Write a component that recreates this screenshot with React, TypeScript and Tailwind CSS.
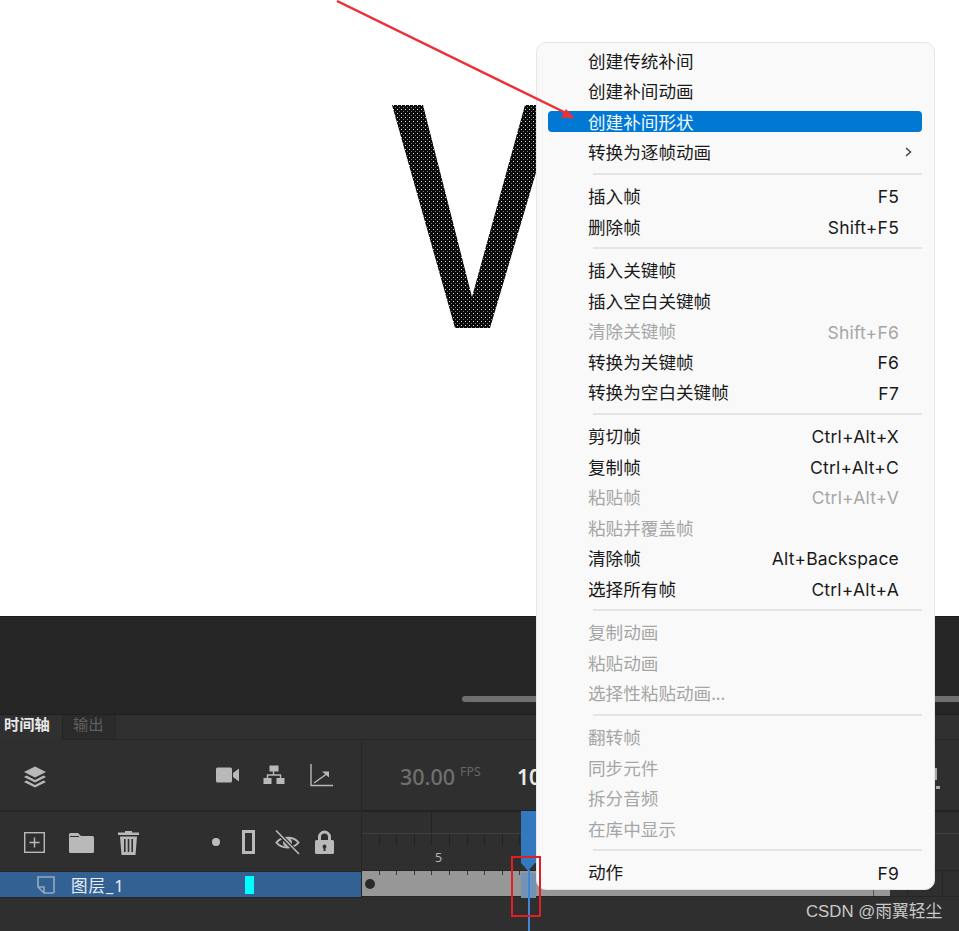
const F = '"Noto Sans","Noto Sans CJK SC",sans-serif';
const K = 'Inter,"Noto Sans",sans-serif';

type Row = { t: string; k?: string; d?: boolean; a?: boolean; h?: boolean } | 'sep';
const rows: Row[] = [
  { t: '创建传统补间' }, { t: '创建补间动画' }, { t: '创建补间形状', h: true }, { t: '转换为逐帧动画', a: true }, 'sep',
  { t: '插入帧', k: 'F5' }, { t: '删除帧', k: 'Shift+F5' }, 'sep',
  { t: '插入关键帧' }, { t: '插入空白关键帧' }, { t: '清除关键帧', k: 'Shift+F6', d: true }, { t: '转换为关键帧', k: 'F6' }, { t: '转换为空白关键帧', k: 'F7' }, 'sep',
  { t: '剪切帧', k: 'Ctrl+Alt+X' }, { t: '复制帧', k: 'Ctrl+Alt+C' }, { t: '粘贴帧', k: 'Ctrl+Alt+V', d: true }, { t: '粘贴并覆盖帧', d: true }, { t: '清除帧', k: 'Alt+Backspace' }, { t: '选择所有帧', k: 'Ctrl+Alt+A' }, 'sep',
  { t: '复制动画', d: true }, { t: '粘贴动画', d: true }, { t: '选择性粘贴动画...', d: true }, 'sep',
  { t: '翻转帧', d: true }, { t: '同步元件', d: true }, { t: '拆分音频', d: true }, { t: '在库中显示', d: true }, 'sep',
  { t: '动作', k: 'F9' },
];

function Menu() {
  return (
    <div className="absolute left-[536px] top-[42px] w-[399px] h-[848px] rounded-[10px] bg-[#f9f9f9] border border-[#e6e6e6] pt-[2.500px] px-[11px] text-[17.600px] text-[#1a1a1a]" style={{ fontFamily: F }}>
      {rows.map((r, i) =>
        r === 'sep' ? (
          <div key={i} className="h-[13.250px] flex items-center pl-[45px] pr-[1px]"><div className="h-[2px] w-full bg-[#e4e4e4]" /></div>
        ) : (
          <div key={i} className="h-[30.500px] flex items-center">
            <div className={`w-full h-[21px] rounded-[4px] flex items-center justify-between pl-[40px] pr-[23px] mr-[1px] leading-none ${r.h ? 'bg-[#0078d4] text-[#f2f8fd]' : ''} ${r.d ? 'text-[#a6a6a6]' : ''}`}>
              <span className="pt-[2px]">{r.t}</span>
              {r.k && <span className="pt-[2px] text-[17.500px] tracking-[0.2px]" style={{ fontFamily: K }}>{r.k}</span>}
              {r.a && (
                <svg width="9" height="12" viewBox="0 0 9 12" className="-mr-[14px]"><path d="M2 2l4.500 4-4.500 4" fill="none" stroke="#444" strokeWidth="1.500" /></svg>
              )}
            </div>
          </div>
        ),
      )}
    </div>
  );
}

const ic = '#b9b9b9';
const ticks = Array.from({ length: 28 }, (_, i) => i);

function LayerIcons() {
  return (
    <svg viewBox="0 0 24 24" fill={ic} className="w-[24px] h-[24px] mt-[4px]">
      <path d="M12 1.500 L23 7 12 12.500 1 7Z" />
      <path d="M3.500 10.500 L12 15 20.500 10.500 23 12 12 17.500 1 12Z" />
      <path d="M3.500 15.500 L12 20 20.500 15.500 23 17 12 22.500 1 17Z" />
    </svg>
  );
}

function Ruler() {
  return (
    <div className="flex flex-col h-[61px] border-t-2 border-[#232323]">
      <div className="h-[22px] border-b border-[#3f3f3f] flex">
        <div className="w-[70px] border-r border-[#232323]" />
      </div>
      <div className="h-[12px] flex">
        {ticks.map((i) => <div key={i} className="w-[17.600px] shrink-0 border-r border-[#232323]" />)}
      </div>
      <div className="flex-1 relative">
        <span className="absolute left-[73px] top-[3px] text-[12.500px] text-[#b3b3b3]" style={{ fontFamily: F }}>5</span>
      </div>
    </div>
  );
}

export default function App() {
  return (
    <div className="relative w-[959px] h-[931px] overflow-hidden bg-[#2f2f2f]" style={{ fontFamily: F }}>
      <div className="h-[616px] bg-white" />
      <div className="h-[98px] bg-[#262626] border-t border-[#1c1c1c] flex flex-col items-end pt-[79px]">
        <div className="w-[497px] h-[6px] rounded-l-full bg-[#6f6f6f]" />
      </div>

      <div className="h-[26px] flex items-stretch bg-[#303030] border-t border-[#1f1f1f]">
        <div className="w-[63px] pl-[4px] pb-[5px] text-[15.300px] font-semibold text-[#e8e8e8] flex items-center leading-none border-r border-[#242424]">时间轴</div>
        <div className="w-[53px] pl-[10px] pb-[5px] text-[15.300px] text-[#5f5f5f] bg-[#2b2b2b] flex items-center leading-none border-r border-[#272727] border-b border-b-[#272727]">输出</div>
        <div className="flex-1 border-b border-[#272727]" />
      </div>

      <div className="flex">
        <div className="w-[361px] shrink-0">
          <div className="h-[70px] flex items-center pl-[23px] pr-[28px] justify-between">
            <LayerIcons />
            <div className="flex items-center gap-[24px]">
              <svg width="24" height="16" viewBox="0 0 24 16" fill={ic}><rect x="0" y="0.500" width="16" height="15" rx="1.500" /><path d="M17 6 L23 1.500V14.500L17 10Z" /></svg>
              <svg width="22" height="20" viewBox="0 0 22 20" fill={ic} className="-ml-[1px] mr-[1px]"><rect x="6.500" y="0.500" width="9" height="6" /><rect x="0.500" y="13" width="8" height="6" /><rect x="13.500" y="13" width="8" height="6" /><path d="M10.500 6v4M4.500 13v-3h13v3" fill="none" stroke={ic} strokeWidth="1.400" /></svg>
              <svg width="23" height="23" viewBox="0 0 23 23" fill="none" stroke={ic} strokeWidth="1.400"><path d="M1 0v21.500h22" /><path d="M4 19 L18 9" /><path d="M12 7.500h7v6" fill={ic} stroke="none" /></svg>
            </div>
          </div>
          <div className="h-[62px] border-t-2 border-[#262626] flex items-center pl-[24px] pr-[27px] justify-between">
            <div className="flex items-center gap-[24px]">
              <svg width="21" height="21" viewBox="0 0 21 21" fill="none" stroke={ic} strokeWidth="1.400"><rect x="0.700" y="0.700" width="19.600" height="19.600" /><path d="M10.500 5.500v10M5.500 10.500h10" /></svg>
              <svg width="25" height="21" viewBox="0 0 25 21" fill={ic}><path d="M0 2.500a1.500 1.500 0 0 1 1.500-1.500H9l3 3h11.500A1.500 1.500 0 0 1 25 5.500v14a1.500 1.500 0 0 1-1.500 1.500h-22A1.500 1.500 0 0 1 0 19.500z" /><path d="M1 4.500H10" stroke="#2f2f2f" strokeWidth="1" fill="none" /></svg>
              <svg width="23" height="25" viewBox="0 0 23 25" fill={ic} className="-ml-[1px]"><path d="M8 2.500V1h7v1.500h7V5H1V2.500z" /><path fillRule="evenodd" d="M3 6.500h17l-1.500 18.500h-14zM7 9v13h1.600V9zM10.700 9v13h1.600V9zM14.400 9v13h1.600V9z" /></svg>
            </div>
            <div className="flex items-center gap-[18px]">
              <div className="w-[8px] h-[8px] rounded-full bg-[#bdbdbd] mr-[4px]" />
              <div className="w-[13px] h-[24px] border-[3px] border-[#b9b9b9]" />
              <svg width="25" height="25" viewBox="0 0 25 25" fill="none" stroke={ic} strokeWidth="2" className="ml-[2px]"><path d="M1.500 12.500C6 6 19 6 23.500 12.500 19 19 6 19 1.500 12.500Z" /><circle cx="12.500" cy="12.500" r="3.500" fill={ic} /><path d="M1.500 1l22 23" stroke="#2f2f2f" strokeWidth="4" /><path d="M1 .5l23 23.500" strokeWidth="1.600" /></svg>
              <svg width="19" height="24" viewBox="0 0 19 24" fill={ic} className="-ml-[3px]"><path fillRule="evenodd" d="M1.500 10h1.500V7a6.500 6.500 0 0 1 13 0v3h1.500A1.500 1.500 0 0 1 19 11.500v11a1.500 1.500 0 0 1-1.500 1.500h-16A1.500 1.500 0 0 1 0 22.500v-11A1.500 1.500 0 0 1 1.500 10zM6 10h7V7a3.500 3.500 0 0 0-7 0zM9.500 14.500a2 2 0 0 0-1 3.700V21h2v-2.800a2 2 0 0 0-1-3.700z" /></svg>
            </div>
          </div>
          <div className="h-[27px] -mt-[1px] bg-[#336193] border-y border-[#262626] flex items-center pl-[37px] text-white">
            <svg width="18" height="18" viewBox="0 0 18 18" fill="none" stroke="#95a9c0" strokeWidth="1.600"><path d="M1 1h16v15a1 1 0 0 1-1 1H7L1 11zM1 11h6v6" /></svg>
            <span className="ml-[16px] pt-[3px] text-[16.500px] tracking-[1px] leading-none text-[#e8eef5] whitespace-nowrap">图层_1</span>
            <div className="ml-[120px] w-[9px] h-[18px] bg-[#00ffff]" />
          </div>
        </div>

        <div className="flex-1 border-l border-[#262626] min-w-0">
          <div className="h-[70px] flex items-center pl-[38px] pt-[4px]">
            <span className="text-[21.500px] font-medium text-[#6f6f6f] leading-none">30.00</span>
            <span className="ml-[5px] mb-[10px] text-[12.500px] text-[#666666] leading-none">FPS</span>
            <span className="ml-[36px] text-[21px] font-semibold text-[#eaeaea] leading-none">10</span>
          </div>
          <Ruler />
          <div className="h-[27px] -mt-[1px] flex border-y border-[#262626]">
            <div className="relative w-[511px] h-full bg-[#979797] flex items-center pl-[3px]">
              <div className="absolute left-0 top-0 flex h-[4px]">
                {ticks.map((i) => <div key={i} className="w-[17.600px] shrink-0 border-r border-[#3a3a3a]" />)}
              </div>
              <div className="w-[10px] h-[10px] rounded-full bg-[#2a2a2a]" />
            </div>
            <div className="w-[17px] h-full bg-[#979797] border-l border-[#555555]" />
            <div className="w-[18px] h-full border-r border-[#262626]" />
            <div className="w-[35px] h-full border-r border-[#262626]" />
          </div>
        </div>
      </div>

      {/* stage artwork */}
      <svg className="absolute left-0 top-0" width="959" height="616" viewBox="0 0 959 616">
        <defs>
          <pattern id="dots" width="4" height="4" patternUnits="userSpaceOnUse">
            <rect width="4" height="4" fill="#0a0a0a" />
            <rect x="1" y="1" width="1" height="1" fill="#e4e4e4" />
            <rect x="3" y="3" width="1" height="1" fill="#7a7a7a" />
          </pattern>
        </defs>
        <path d="M392 105 L423 105 L472 297 L525 105 L556 105 L490 328 L455 328Z" fill="url(#dots)" />
      </svg>

      {/* playhead */}
      <div className="absolute left-[521px] top-[811px] w-[15px] h-[52px] bg-[#3478c0]" />
      <div className="absolute left-[521px] top-[863px] w-0 h-0 border-l-[7.500px] border-r-[7.500px] border-t-[8px] border-l-transparent border-r-transparent border-t-[#3478c0]" />
      <div className="absolute left-[521px] top-[873px] w-[15px] h-[25px] bg-[#7292b6]" />
      <div className="absolute left-[528px] top-[870px] w-[2px] h-[61px] bg-[#3f86d4]" />

      {/* icon fragment beside the menu */}
      <div className="absolute left-[935px] top-[768px] w-[2px] h-[12px] bg-[#aaaaaa]" />
      <div className="absolute left-[936px] top-[786px] w-[4px] h-[3px] bg-[#aaaaaa]" />

      <Menu />

      {/* annotations */}
      <svg className="absolute left-0 top-0 pointer-events-none" width="959" height="931" viewBox="0 0 959 931">
        <path d="M337 1 L566 113" stroke="#ed2f38" strokeWidth="2.500" fill="none" />
        <path d="M575 118.500 L566 109 L561 117.500Z" fill="#ed2f38" />
        <rect x="512" y="857" width="28" height="59" fill="none" stroke="#e21d25" strokeWidth="2" />
      </svg>

      <span className="absolute left-[806px] top-[901px] text-[16.800px] text-[#c9c9c9] leading-[22px] whitespace-nowrap" style={{ fontFamily: '"Liberation Sans","Noto Sans CJK SC",sans-serif' }}>CSDN @雨翼轻尘</span>
    </div>
  );
}
